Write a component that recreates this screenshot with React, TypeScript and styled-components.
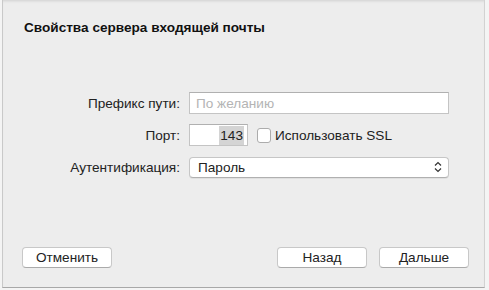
import React from "react";
import styled, { createGlobalStyle } from "styled-components";

const Global = createGlobalStyle`
  html, body { margin: 0; padding: 0; background: #f4f4f4; }
  body { font-family: "Liberation Sans", Arial, sans-serif; }
`;

const Frame = styled.div`
  width: 489px;
  height: 290px;
  box-sizing: border-box;
  padding: 0 4px 2px 2px;
  display: flex;
`;

const Sheet = styled.div`
  flex: 1;
  display: flex;
  flex-direction: column;
  background: #ededed;
  border-left: 1px solid #c9c9c9;
  border-right: 1px solid #d2d2d2;
  border-bottom: 1px solid #a8a8a8;
  box-shadow: inset 0 3px 3px -2px rgba(0, 0, 0, 0.12);
  padding: 19px 15px 19px 19px;
  box-sizing: border-box;
`;

const Title = styled.h1`
  margin: 1px 0 0 2px;
  font-size: 13.6px;
  font-weight: bold;
  color: #111;
  line-height: 16px;
`;

const Form = styled.div`
  margin-top: 56px;
  display: grid;
  grid-template-columns: 158px 260px;
  grid-auto-rows: 22px;
  column-gap: 9px;
  row-gap: 10px;
  align-items: center;
`;

const Label = styled.label`
  justify-self: end;
  font-size: 13.6px;
  color: #222;
`;

const Field = styled.div<{ $w?: number; $align?: string }>`
  box-sizing: border-box;
  height: 22px;
  width: ${(p) => (p.$w ? `${p.$w}px` : "100%")};
  background: #fff;
  border: 1px solid #c4c4c4;
  border-top-color: #b0b0b0;
  display: flex;
  align-items: center;
  justify-content: ${(p) => p.$align || "flex-start"};
  padding: 0 3px 0 6px;
  font-size: 13.6px;
  color: #222;
`;

const Placeholder = styled.span`
  color: #b4b4b4;
`;

const Selected = styled.span`
  background: #d4d4d4;
  padding: 2px 1px 2px;
`;

const PortRow = styled.div`
  display: flex;
  align-items: center;
  gap: 9px;
`;

const CheckWrap = styled.label`
  display: flex;
  align-items: center;
  gap: 4px;
  font-size: 13.6px;
  color: #222;
`;

const Box = styled.span`
  width: 12px;
  height: 13px;
  border: 1px solid #acacac;
  border-radius: 3px;
  background: #fff;
  display: inline-block;
`;

const Popup = styled.div`
  box-sizing: border-box;
  height: 21px;
  width: 100%;
  background: #fff;
  border: 1px solid #c6c6c6;
  border-bottom-color: #b0b0b0;
  border-radius: 4px;
  box-shadow: 0 1px 0 rgba(0, 0, 0, 0.05);
  display: flex;
  align-items: center;
  justify-content: space-between;
  padding: 0 6px 0 8px;
  font-size: 13.6px;
  color: #222;
`;

const Spacer = styled.div`
  flex: 1;
`;

const Footer = styled.div`
  display: flex;
  align-items: center;
`;

const Button = styled.button`
  box-sizing: border-box;
  width: 90px;
  height: 21px;
  background: #fff;
  border: 1px solid #c8c8c8;
  border-bottom-color: #aaa;
  border-radius: 4px;
  font-family: "Liberation Sans", Arial, sans-serif;
  font-size: 13.6px;
  color: #222;
  padding: 0;
  line-height: 18px;
`;

const RightButtons = styled.div`
  margin-left: auto;
  display: flex;
  gap: 12px;
`;

const Chevrons = () => (
  <svg width="8" height="12" viewBox="0 0 8 12">
    <path d="M1 4.5 L4 1.5 L7 4.5 M1 7.5 L4 10.5 L7 7.5" fill="none" stroke="#333" strokeWidth="1.2" />
  </svg>
);

export default function App() {
  return (
    <>
      <Global />
      <Frame>
        <Sheet>
          <Title>Свойства сервера входящей почты</Title>
          <Form>
            <Label>Префикс пути:</Label>
            <Field>
              <Placeholder>По желанию</Placeholder>
            </Field>
            <Label>Порт:</Label>
            <PortRow>
              <Field $w={59} $align="flex-end">
                <Selected>143</Selected>
              </Field>
              <CheckWrap>
                <Box />
                Использовать SSL
              </CheckWrap>
            </PortRow>
            <Label>Аутентификация:</Label>
            <Popup>
              <span>Пароль</span>
              <Chevrons />
            </Popup>
          </Form>
          <Spacer />
          <Footer>
            <Button>Отменить</Button>
            <RightButtons>
              <Button>Назад</Button>
              <Button>Дальше</Button>
            </RightButtons>
          </Footer>
        </Sheet>
      </Frame>
    </>
  );
}
